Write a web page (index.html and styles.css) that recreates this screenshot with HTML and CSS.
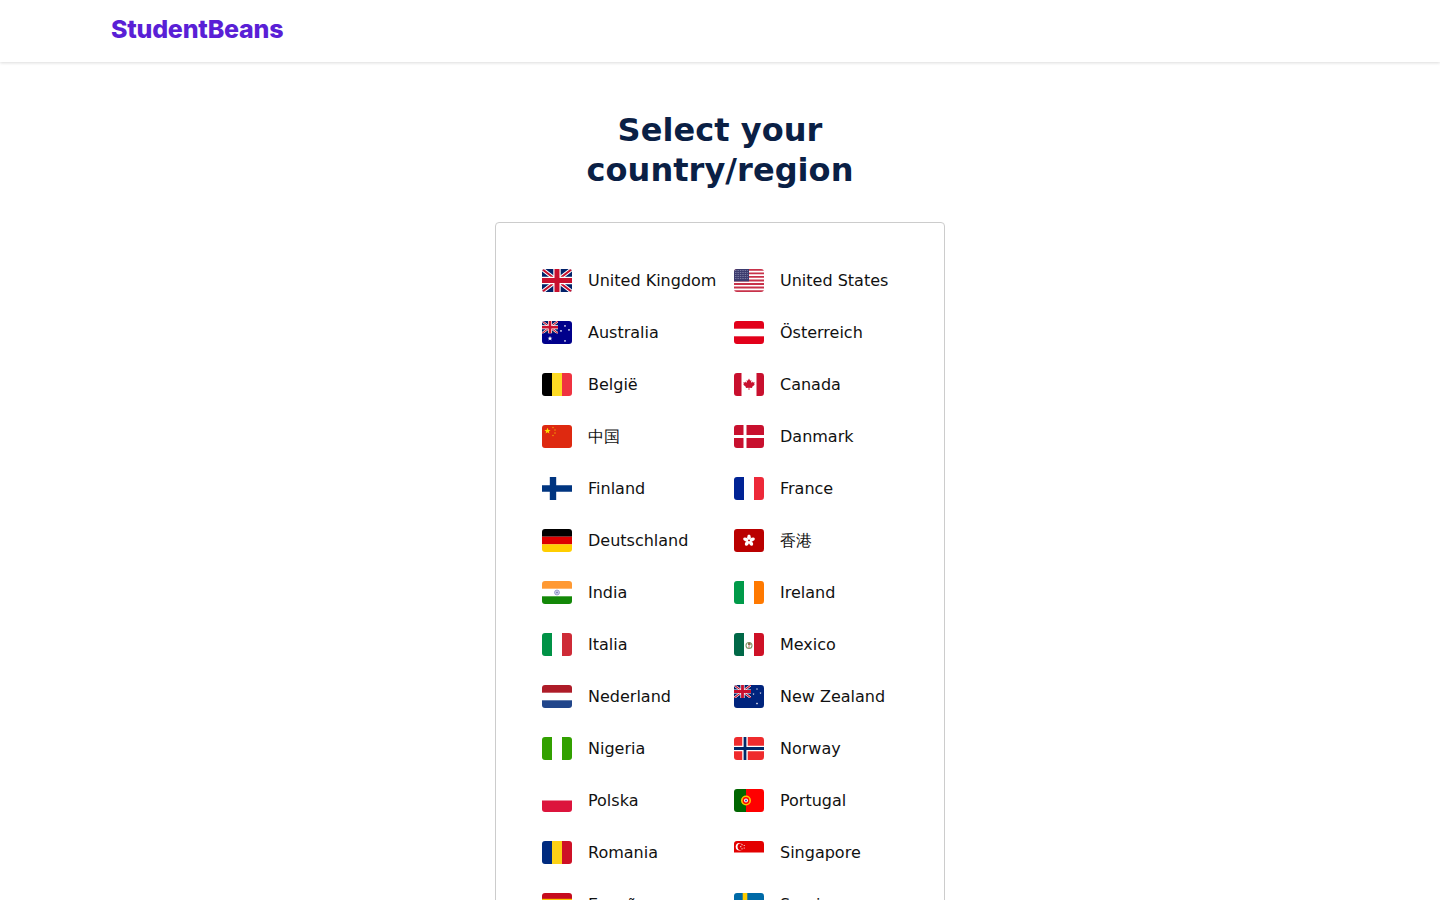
FILE: index.html
```html
<!DOCTYPE html>
<html lang="en">
<head>
  <meta charset="UTF-8">
  <title>Student Beans - Select your country/region</title>
  <link rel="stylesheet" href="styles.css">
</head>
<body>
  <svg class="defs" width="0" height="0" aria-hidden="true">
    <defs>
      <polygon id="star" points="0,-1 .29,-.31 .95,-.31 .42,.13 .59,.81 0,.42 -.59,.81 -.42,.13 -.95,-.31 -.29,-.31"/>
      <g id="union">
        <rect width="30" height="23" fill="#012169"/>
        <path d="M0 0L30 23M30 0L0 23" stroke="#fff" stroke-width="4"/>
        <path d="M0 0L30 23M30 0L0 23" stroke="#c8102e" stroke-width="2"/>
        <path d="M15 0V23M0 11.5H30" stroke="#fff" stroke-width="7.4"/>
        <path d="M15 0V23M0 11.5H30" stroke="#c8102e" stroke-width="5"/>
      </g>
    </defs>
  </svg>

  <header class="topbar">
    <a class="logo" href="#">StudentBeans</a>
  </header>

  <main class="content">
    <h1 class="page_title">Select your country/region</h1>
    <div class="card">
      <ul class="countries">
        <li><a href="#"><svg class="flag" viewBox="0 0 30 23"><use href="#union"/></svg>United Kingdom</a></li>
        <li><a href="#"><svg class="flag" viewBox="0 0 30 23">
          <rect width="30" height="23" fill="#fff"/>
          <path d="M0 .9H30M0 4.4H30M0 7.9H30M0 11.5H30M0 15H30M0 18.5H30M0 22.1H30" stroke="#c8324a" stroke-width="1.77"/>
          <rect width="15" height="12.4" fill="#3c3b6e"/>
          <path d="M1 1.5H14.500M1 3.500H14.500M1 5.500H14.500M1 7.500H14.500M1 9.500H14.500" stroke="#b9bdd6" stroke-width=".7" stroke-dasharray=".7 1"/>
        </svg>United States</a></li>

        <li><a href="#"><svg class="flag" viewBox="0 0 30 23">
          <rect width="30" height="23" fill="#00008b"/>
          <svg width="16" height="12.500" viewBox="0 0 30 23"><use href="#union"/></svg>
          <g fill="#fff"><use href="#star" transform="translate(8 17.500) scale(2.500)"/><use href="#star" transform="translate(23 20) scale(1.300)"/><use href="#star" transform="translate(23 5) scale(1.300)"/><use href="#star" transform="translate(19 10) scale(1.300)"/><use href="#star" transform="translate(27 9) scale(1.300)"/></g>
        </svg>Australia</a></li>
        <li><a href="#"><svg class="flag" viewBox="0 0 30 23"><rect width="30" height="7.700" fill="#e2001a"/><rect y="15.300" width="30" height="7.700" fill="#e2001a"/></svg>Österreich</a></li>

        <li><a href="#"><svg class="flag" viewBox="0 0 30 23"><rect width="10" height="23" fill="#000"/><rect x="10" width="10" height="23" fill="#fdda24"/><rect x="20" width="10" height="23" fill="#ef3340"/></svg>België</a></li>
        <li><a href="#"><svg class="flag" viewBox="0 0 30 23"><rect width="7.500" height="23" fill="#c8102e"/><rect x="22.500" width="7.500" height="23" fill="#c8102e"/>
          <path d="M15 5.500l1.200 2.200 1.200-.6-.5 2.900 1.500-1.400.4 1 1.900-.3-.6 1.900.8.400-2.900 2.400.3 1.100-2.900-.4v2.300h-.8v-2.300l-2.900.4.300-1.100-2.900-2.400.8-.4-.6-1.900 1.900.3.400-1 1.500 1.400-.5-2.900 1.200.6z" fill="#c8102e"/>
        </svg>Canada</a></li>

        <li><a href="#"><svg class="flag" viewBox="0 0 30 23"><rect width="30" height="23" fill="#de2910"/><g fill="#ffde00"><use href="#star" transform="translate(5.500 6) scale(3.200)"/><use href="#star" transform="translate(11 2.500) scale(.9)"/><use href="#star" transform="translate(13 5) scale(.9)"/><use href="#star" transform="translate(13 8) scale(.9)"/><use href="#star" transform="translate(11 10.500) scale(.9)"/></g></svg>中国</a></li>
        <li><a href="#"><svg class="flag" viewBox="0 0 30 23"><rect width="30" height="23" fill="#c8102e"/><path d="M11 0V23M0 11.500H30" stroke="#fff" stroke-width="3"/></svg>Danmark</a></li>

        <li><a href="#"><svg class="flag" viewBox="0 0 30 23"><path d="M11 0V23M0 11.500H30" stroke="#003580" stroke-width="6.400"/></svg>Finland</a></li>
        <li><a href="#"><svg class="flag" viewBox="0 0 30 23"><rect width="10" height="23" fill="#002395"/><rect x="20" width="10" height="23" fill="#ed2939"/></svg>France</a></li>

        <li><a href="#"><svg class="flag" viewBox="0 0 30 23"><rect width="30" height="7.700" fill="#000"/><rect y="7.700" width="30" height="7.700" fill="#d00"/><rect y="15.300" width="30" height="7.700" fill="#ffce00"/></svg>Deutschland</a></li>
        <li><a href="#"><svg class="flag" viewBox="0 0 30 23"><rect width="30" height="23" fill="#ba0000"/>
          <g fill="#fff"><ellipse cx="15" cy="8.200" rx="1.800" ry="2.800"/><ellipse cx="15" cy="8.200" rx="1.800" ry="2.800" transform="rotate(72 15 11.500)"/><ellipse cx="15" cy="8.200" rx="1.800" ry="2.800" transform="rotate(144 15 11.500)"/><ellipse cx="15" cy="8.200" rx="1.800" ry="2.800" transform="rotate(216 15 11.500)"/><ellipse cx="15" cy="8.200" rx="1.800" ry="2.800" transform="rotate(288 15 11.500)"/></g>
          <circle cx="15" cy="11.500" r=".7" fill="#ba0000"/>
        </svg>香港</a></li>

        <li><a href="#"><svg class="flag" viewBox="0 0 30 23"><rect width="30" height="7.700" fill="#f93"/><rect y="15.300" width="30" height="7.700" fill="#138808"/><circle cx="15" cy="11.500" r="2.500" fill="#c9cbe6" stroke="#8a8ec4" stroke-width=".7"/><circle cx="15" cy="11.500" r=".8" fill="#6a6fb0"/></svg>India</a></li>
        <li><a href="#"><svg class="flag" viewBox="0 0 30 23"><rect width="10" height="23" fill="#009a49"/><rect x="20" width="10" height="23" fill="#ff7900"/></svg>Ireland</a></li>

        <li><a href="#"><svg class="flag" viewBox="0 0 30 23"><rect width="10" height="23" fill="#009246"/><rect x="20" width="10" height="23" fill="#ce2b37"/></svg>Italia</a></li>
        <li><a href="#"><svg class="flag" viewBox="0 0 30 23"><rect width="10" height="23" fill="#006847"/><rect x="20" width="10" height="23" fill="#ce1126"/><circle cx="15" cy="12.500" r="3" fill="none" stroke="#7f9a6a" stroke-width="1.100"/><circle cx="15.300" cy="11" r="1.500" fill="#8a6a4a"/><circle cx="15" cy="14" r=".8" fill="#c45a5a"/></svg>Mexico</a></li>

        <li><a href="#"><svg class="flag" viewBox="0 0 30 23"><rect width="30" height="7.700" fill="#ae1c28"/><rect y="15.300" width="30" height="7.700" fill="#21468b"/></svg>Nederland</a></li>
        <li><a href="#"><svg class="flag" viewBox="0 0 30 23"><rect width="30" height="23" fill="#00247d"/><svg width="17" height="13" viewBox="0 0 30 23"><use href="#union"/></svg>
          <g fill="#e8e8f0"><use href="#star" transform="translate(23 4) scale(1.100)"/><use href="#star" transform="translate(19.500 9) scale(1.100)"/><use href="#star" transform="translate(26.500 8) scale(1.100)"/><use href="#star" transform="translate(23 18.500) scale(1.300)"/></g>
        </svg>New Zealand</a></li>

        <li><a href="#"><svg class="flag" viewBox="0 0 30 23"><rect width="10" height="23" fill="#32a000"/><rect x="20" width="10" height="23" fill="#32a000"/></svg>Nigeria</a></li>
        <li><a href="#"><svg class="flag" viewBox="0 0 30 23"><rect width="30" height="23" fill="#ef2b2d"/><path d="M11 0V23M0 11.500H30" stroke="#fff" stroke-width="5.500"/><path d="M11 0V23M0 11.500H30" stroke="#002868" stroke-width="2.800"/></svg>Norway</a></li>

        <li><a href="#"><svg class="flag" viewBox="0 0 30 23"><rect y="11.500" width="30" height="11.500" fill="#dc143c"/></svg>Polska</a></li>
        <li><a href="#"><svg class="flag" viewBox="0 0 30 23"><rect width="12" height="23" fill="#060"/><rect x="12" width="18" height="23" fill="#f00"/><circle cx="12" cy="11.500" r="5" fill="#ffc400"/><circle cx="12" cy="11.500" r="3.400" fill="#f00"/><circle cx="12" cy="11.500" r="2" fill="#fff"/><circle cx="12" cy="11.500" r="1" fill="#2a4fa8"/></svg>Portugal</a></li>

        <li><a href="#"><svg class="flag" viewBox="0 0 30 23"><rect width="10" height="23" fill="#002b7f"/><rect x="10" width="10" height="23" fill="#fcd116"/><rect x="20" width="10" height="23" fill="#ce1126"/></svg>Romania</a></li>
        <li><a href="#"><svg class="flag" viewBox="0 0 30 23"><rect width="30" height="11.500" fill="#e30000"/><circle cx="5.500" cy="5.700" r="3.800" fill="#fff"/><circle cx="7" cy="5.700" r="3.500" fill="#e30000"/><g fill="#fff"><circle cx="8" cy="3.700" r=".6"/><circle cx="10.200" cy="4.500" r=".6"/><circle cx="10.200" cy="7" r=".6"/><circle cx="8" cy="7.800" r=".6"/><circle cx="6.800" cy="5.700" r=".6"/></g></svg>Singapore</a></li>

        <li><a href="#"><svg class="flag" viewBox="0 0 30 23"><rect width="30" height="23" fill="#c60b1e"/><rect y="5.800" width="30" height="11.500" fill="#ffc400"/></svg>España</a></li>
        <li><a href="#"><svg class="flag" viewBox="0 0 30 23"><rect width="30" height="23" fill="#006aa7"/><path d="M11 0V23M0 11.500H30" stroke="#fecc00" stroke-width="4.600"/></svg>Sverige</a></li>
      </ul>
    </div>
  </main>
</body>
</html>
```

FILE: styles.css
```css
html,body{
	margin: 0;
	background: #fff;
	font-family: "DejaVu Sans", sans-serif;
	color: #111;
}
.defs{
	position: absolute;
}
.topbar{
	box-sizing: border-box;
	height: 62px;
	padding: 0 0 4px 111px;
	display: flex;
	align-items: center;
	background: #fff;
	box-shadow: 0 1px 3px rgba(0,0,0,0.14);
}
.logo{
	font-family: Inter, sans-serif;
	font-size: 25px;
	font-weight: 800;
	letter-spacing: -0.25px;
	color: #5a1fd6;
	text-decoration: none;
}
.content{
	padding: 48px 0 32px;
}
.page_title{
	width: 320px;
	margin: 0 auto 32px;
	font-size: 32px;
	line-height: 40px;
	font-weight: 700;
	letter-spacing: 0.05px;
	text-align: center;
	color: #0a2045;
}
.card{
	box-sizing: border-box;
	width: 450px;
	margin: 0 auto;
	padding: 31px 18px 31px 46px;
	border: solid 1px #ccc;
	border-radius: 4px;
}
.countries{
	display: grid;
	grid-template-columns: 192px 192px;
	margin: 0;
	padding: 0;
	list-style: none;
}
.countries a{
	display: flex;
	align-items: center;
	gap: 16px;
	padding: 15px 0 14px;
	font-size: 16px;
	line-height: 23px;
	color: #111;
	text-decoration: none;
	white-space: nowrap;
}
.flag{
	flex: none;
	width: 30px;
	height: 23px;
	border-radius: 3px;
}
```
